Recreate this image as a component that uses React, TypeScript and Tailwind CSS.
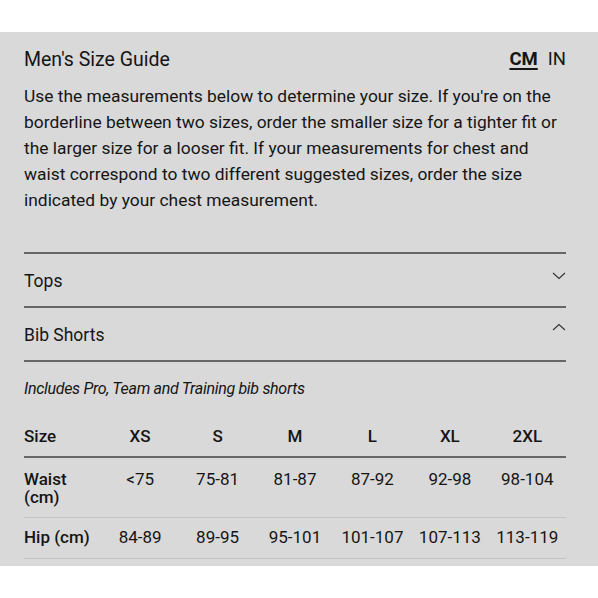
import React from "react";

const sizes = ["XS", "S", "M", "L", "XL", "2XL"];
const waist = ["<75", "75-81", "81-87", "87-92", "92-98", "98-104"];
const hip = ["84-89", "89-95", "95-101", "101-107", "107-113", "113-119"];

function Chevron({ up }: { up?: boolean }) {
  return (
    <svg width="14" height="8" viewBox="0 0 14 8" fill="none" stroke="#333" strokeWidth="1.1">
      {up ? <path d="M1 7 L7 1.5 L13 7" /> : <path d="M1 1 L7 6.5 L13 1" />}
    </svg>
  );
}

export default function App() {
  return (
    <div className="w-[598px] h-[598px] bg-white pt-[32px]" style={{ fontFamily: "Roboto, 'Liberation Sans', sans-serif" }}>
      <div className="bg-[#d9d9d9] pl-[24px] pr-[32px] pt-[14px] pb-[7px] text-[#151515]">
        <div className="flex items-center justify-between h-[28px]">
          <div className="text-[19.5px]">Men's Size Guide</div>
          <div className="flex gap-[10px] text-[18.5px]">
            <span className="font-bold underline underline-offset-[3px] decoration-2">CM</span>
            <span>IN</span>
          </div>
        </div>
        <p className="mt-[9px] text-[17.4px] leading-[26px]">
          Use the measurements below to determine your size. If you're on the borderline between two sizes, order the smaller size for a tighter fit or the larger size for a looser fit. If your measurements for chest and waist correspond to two different suggested sizes, order the size indicated by your chest measurement.
        </p>
        <div className="mt-[39px] border-t-2 border-[#666]">
          <div className="flex items-center justify-between h-[52px] text-[17.5px]">
            <span className="mt-[3px]">Tops</span>
            <span className="mb-[8px]"><Chevron /></span>
          </div>
        </div>
        <div className="border-t-2 border-[#666]">
          <div className="flex items-center justify-between h-[52px] text-[17.5px]">
            <span className="mt-[2px]">Bib Shorts</span>
            <span className="mb-[15px]"><Chevron up /></span>
          </div>
        </div>
        <div className="border-t-2 border-[#666]">
          <div className="pt-[15px] text-[16px] tracking-[-0.3px] italic leading-[24px]">Includes Pro, Team and Training bib shorts</div>
          <div className="mt-[23px] text-[17px]">
            <div className="grid grid-cols-7 items-center pb-[6px] border-b-2 border-[#666] font-medium">
              <div>Size</div>
              {sizes.map((s) => (
                <div key={s} className="text-center">{s}</div>
              ))}
            </div>
            <div className="grid grid-cols-7 items-start pt-[12px] pb-[11px] border-b border-[#c4c4c4] leading-[18px]">
              <div className="font-medium">Waist<br />(cm)</div>
              {waist.map((s) => (
                <div key={s} className="text-center">{s}</div>
              ))}
            </div>
            <div className="grid grid-cols-7 items-center h-[41px] border-b border-[#c4c4c4]">
              <div className="font-medium whitespace-nowrap">Hip (cm)</div>
              {hip.map((s) => (
                <div key={s} className="text-center">{s}</div>
              ))}
            </div>
          </div>
        </div>
      </div>
    </div>
  );
}
